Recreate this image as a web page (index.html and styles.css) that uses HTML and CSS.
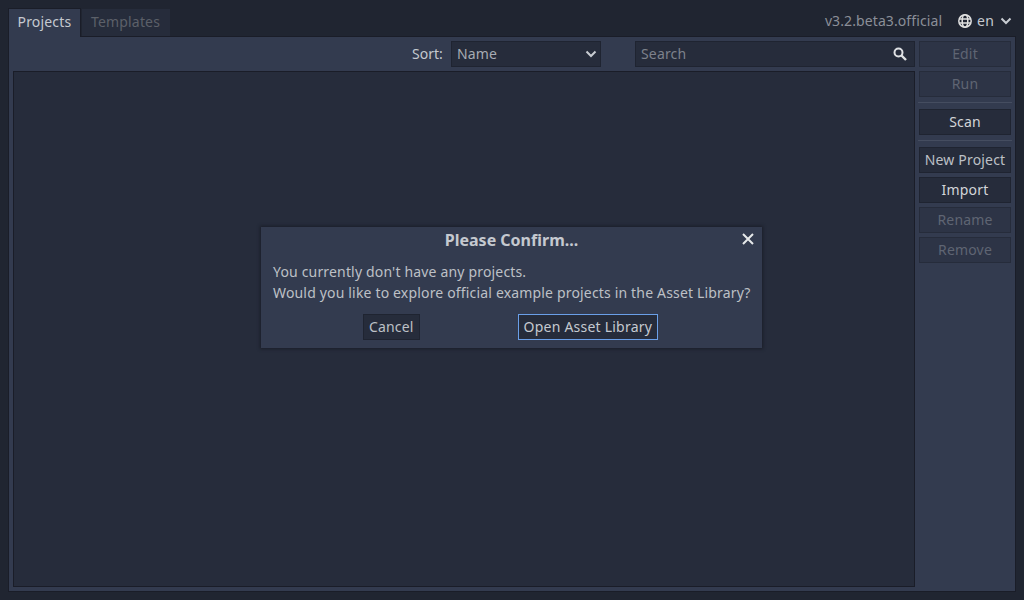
FILE: index.html
```html
<!DOCTYPE html>
<html lang="en">
<head>
<meta charset="utf-8">
<title>Project Manager</title>
<link rel="stylesheet" href="styles.css">
</head>
<body>
<div class="window">
  <header class="topbar">
    <nav class="tabs">
      <div class="tab tab-active">Projects</div>
      <div class="tab tab-idle">Templates</div>
    </nav>
    <div class="top-right">
      <span class="version">v3.2.beta3.official</span>
      <div class="lang">
        <svg class="globe" width="16" height="16" viewBox="0 0 16 16" fill="none" stroke="#e0e0e0" stroke-width="1.5"><circle cx="8" cy="8" r="6.2"/><ellipse cx="8" cy="8" rx="2.8" ry="6.2"/><path d="M2 6h12M2 10h12"/></svg>
        <span>en</span>
        <svg class="chev" width="12" height="8" viewBox="0 0 12 8" fill="none" stroke="#c8ccd2" stroke-width="2"><path d="M1.5 1.5 6 6l4.5-4.5"/></svg>
      </div>
    </div>
  </header>
  <main class="panel">
    <section class="content">
      <div class="toolbar">
        <span class="sort-label">Sort:</span>
        <div class="select">
          <span>Name</span>
          <svg width="12" height="8" viewBox="0 0 12 8" fill="none" stroke="#c8ccd2" stroke-width="2"><path d="M1.5 1.5 6 6l4.5-4.5"/></svg>
        </div>
        <div class="search">
          <span>Search</span>
          <svg width="14" height="14" viewBox="0 0 14 14" fill="none" stroke="#dfe1e4" stroke-width="2"><circle cx="5.5" cy="5.5" r="4"/><path d="M8.5 8.5 13 13" stroke-width="2.4"/></svg>
        </div>
      </div>
      <div class="list"></div>
    </section>
    <aside class="side">
      <div class="btn btn-off">Edit</div>
      <div class="btn btn-off">Run</div>
      <div class="sep"></div>
      <div class="btn">Scan</div>
      <div class="sep"></div>
      <div class="btn btn-dim">New Project</div>
      <div class="btn">Import</div>
      <div class="btn btn-off">Rename</div>
      <div class="btn btn-off">Remove</div>
    </aside>
  </main>
</div>
<div class="dialog">
  <div class="dialog-title">Please Confirm...</div>
  <svg class="close" width="12" height="12" viewBox="0 0 12 12" fill="none" stroke="#e6e8ea" stroke-width="2"><path d="M1 1l10 10M11 1 1 11"/></svg>
  <p class="dialog-text">You currently don't have any projects.<br>Would you like to explore official example projects in the Asset Library?</p>
  <div class="dialog-actions">
    <div class="btn btn-dim dlg-btn">Cancel</div>
    <div class="btn btn-dim dlg-btn btn-focus">Open Asset Library</div>
  </div>
</div>
</body>
</html>
```
FILE: styles.css
```css
* { box-sizing: border-box; }
html, body { margin: 0; height: 100%; }
body {
  width: 1024px;
  height: 600px;
  overflow: hidden;
  background: #202531;
  color: #d0d3d8;
  font: 14px/20px "Noto Sans", sans-serif;
  letter-spacing: 0.17px;
  position: relative;
}
.window {
  display: flex;
  flex-direction: column;
  height: 600px;
  padding: 8px;
}
.topbar {
  display: flex;
  justify-content: space-between;
  height: 28px;
  flex: none;
}
.tabs { display: flex; gap: 1px; align-items: flex-start; }
.tab-active {
  position: relative;
  z-index: 1;
  width: 73px;
  height: 29px;
  padding: 3px 0 0 8.5px;
  background: #333b4f;
  border: 1px solid #1a1d28;
  border-bottom: 0;
  color: #c5c9d0;
}
.tab-idle {
  width: 88px;
  height: 27px;
  margin-top: 1px;
  padding: 3px 0 0 9px;
  background: #262c3b;
  color: #5c6069;
}
.top-right {
  display: flex;
  align-items: flex-start;
  padding: 3px 4px 0 0;
}
.version { color: #8b8f98; margin-right: 15px; letter-spacing: 0.1px; }
.lang { display: flex; align-items: center; height: 20px; color: #c5c9d0; }
.globe { margin-right: 4px; }
.chev { margin-left: 6px; }
.panel {
  flex: 1;
  min-height: 0;
  display: flex;
  background: #333b4f;
  border: 1px solid #1a1d28;
  padding: 4px;
  gap: 4px;
}
.content {
  width: 902px;
  display: flex;
  flex-direction: column;
  gap: 4px;
}
.toolbar {
  display: flex;
  align-items: center;
  height: 26px;
  flex: none;
}
.sort-label { margin-left: 399px; width: 39px; color: #c5c9d0; letter-spacing: 0; }
.select, .search {
  display: flex;
  align-items: center;
  justify-content: space-between;
  height: 26px;
  background: #262c3b;
  border: 1px solid #1f2431;
}
.select {
  width: 150px;
  padding: 0 3px 0 5px;
  color: #a7abb3;
}
.search {
  width: 280px;
  margin-left: 34px;
  padding: 0 7px 0 5px;
  color: #7d818b;
}
.list {
  flex: 1;
  background: #262c3b;
  border: 1px solid #1a1d28;
}
.side {
  width: 92px;
  display: flex;
  flex-direction: column;
  gap: 4px;
}
.btn {
  height: 26px;
  background: #262c3b;
  border: 1px solid #1f2431;
  text-align: center;
  line-height: 24px;
  color: #d3d5d9;
  white-space: nowrap;
}
.btn-dim { color: #bdc0c6; }
.btn-off {
  background: #2d3446;
  border-color: #262c3b;
  color: #5f6573;
}
.sep {
  height: 1px;
  margin: 1px -1px 2px;
  background: #454d60;
}
.dialog {
  position: absolute;
  left: 261px;
  top: 227px;
  width: 501px;
  height: 121px;
  background: #333b4f;
  box-shadow: 0 0 3px 1px #1a1d28;
}
.dialog-title {
  text-align: center;
  font-weight: 700;
  font-size: 16px;
  line-height: 20px;
  padding-top: 3px;
  letter-spacing: 0;
  color: #c5c9d0;
}
.close { position: absolute; right: 8px; top: 6px; }
.dialog-text {
  margin: 11px 0 0 12px;
  line-height: 21px;
  color: #bdc0c6;
  white-space: nowrap;
}
.dialog-actions {
  display: flex;
  margin: 11px 0 0 102px;
  gap: 98px;
}
.dlg-btn { padding: 0 5px; }
.btn-focus { border-color: #6a9fe8; color: #c5c9d0; letter-spacing: 0.22px; }
```
